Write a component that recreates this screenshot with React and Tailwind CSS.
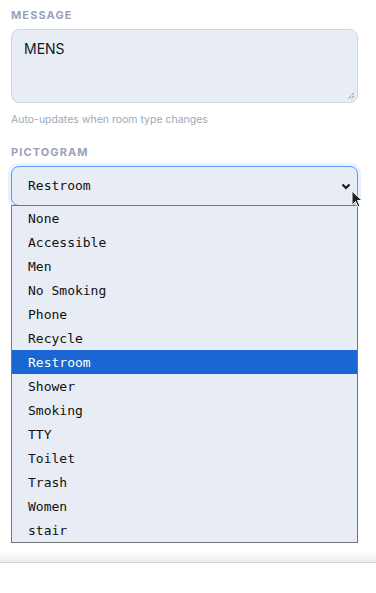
import React from "react";

const items = ["None","Accessible","Men","No Smoking","Phone","Recycle","Restroom","Shower","Smoking","TTY","Toilet","Trash","Women","stair"];

export default function App() {
  return (
    <div className="relative w-[376px] h-[593px] bg-white overflow-hidden" style={{fontFamily: "Inter, 'Noto Sans', sans-serif"}}>
      <div className="px-[11px] pt-[9px]">
        <div className="text-[11px] font-bold tracking-[0.1em] text-[#98a2b8] leading-[13px]">MESSAGE</div>
        <div className="mt-[7px] relative h-[74px] w-[347px] rounded-[8px] border border-[#cfd6e3] bg-[#e8ecf4] px-[12px] pt-[10px] text-[14px] text-[#111827] leading-[18px]">
          MENS
          <svg className="absolute right-[2px] bottom-[2px]" width="9" height="9" viewBox="0 0 9 9">
            <path d="M8 2 L2 8 M8 5 L5 8" stroke="#555" strokeWidth="1" strokeDasharray="1 1" />
          </svg>
        </div>
        <div className="mt-[10px] text-[10.5px] text-[#a0a8b8] leading-[13px]">Auto-updates when room type changes</div>
        <div className="mt-[20px] text-[11px] font-bold tracking-[0.1em] text-[#98a2b8] leading-[13px]">PICTOGRAM</div>
        <div className="mt-[7px] relative h-[40px] w-[347px] rounded-[8px] border border-[#5b9cf0] bg-[#e8ecf4] shadow-[0_0_0_3px_rgba(96,165,250,0.15)] flex items-center pl-[16px]" style={{fontFamily: "'DejaVu Sans Mono', monospace"}}>
          <span className="text-[13px] text-[#111]">Restroom</span>
          <svg className="absolute right-[6px] top-[16px]" width="10" height="7" viewBox="0 0 10 7">
            <path d="M1.5 1.5 L5 5 L8.5 1.5" fill="none" stroke="#111" strokeWidth="2" />
          </svg>
        </div>
      </div>
      <div className="absolute left-0 right-0 top-[551px] h-[12px] bg-gradient-to-b from-white to-[#ececec] border-b border-[#d4d4d4]" />
      <div className="absolute left-[11px] top-[205px] w-[347px] border border-[#767676] bg-[#e8ecf4]" style={{fontFamily: "'DejaVu Sans Mono', monospace"}}>
        {items.map((it) => (
          <div key={it} className={"h-[24px] flex items-center pl-[16px] pt-[2px] text-[13px] " + (it === "Restroom" ? "bg-[#1967d2] text-white" : "text-[#111]")}>{it}</div>
        ))}
      </div>
      <svg className="absolute left-[351px] top-[190px]" width="14" height="20" viewBox="0 0 14 20">
        <path d="M1 1 L1 15 L4.5 11.5 L7 17 L9 16 L6.5 10.5 L11 10.5 Z" fill="#222" stroke="#fff" strokeWidth="1" />
      </svg>
    </div>
  );
}
